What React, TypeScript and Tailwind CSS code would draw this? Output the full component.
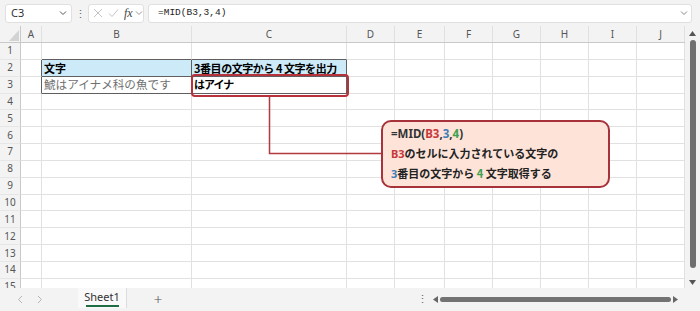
import React from "react";

const cols = [
  { key: "A", w: 21 },
  { key: "B", w: 150 },
  { key: "C", w: 155 },
  { key: "D", w: 48 },
  { key: "E", w: 50 },
  { key: "F", w: 48 },
  { key: "G", w: 48 },
  { key: "H", w: 48 },
  { key: "I", w: 48 },
  { key: "J", w: 48 },
];

const FONT = { fontFamily: '"Noto Sans", "Noto Sans CJK JP", sans-serif' };
const JP = { fontFamily: '"Noto Sans CJK JP", sans-serif' };

function cellClass(r: number, c: string) {
  let right = "border-r-[#e1e1e1]";
  let bottom = "border-b-[#e1e1e1]";
  if ((r === 2 || r === 3) && (c === "A" || c === "B" || c === "C")) right = "border-r-[#5f5f5f]";
  if ((r === 1 || r === 2 || r === 3) && (c === "B" || c === "C")) bottom = "border-b-[#5f5f5f]";
  return `${right} ${bottom}`;
}

function Cell({ r, c, w }: { r: number; c: string; w: number }) {
  let content: React.ReactNode = null;
  let bg = "";
  if (r === 2 && c === "B") {
    bg = "bg-[#cdeaf8]";
    content = <span className="font-bold text-[11px] text-black" style={JP}>文字</span>;
  }
  if (r === 2 && c === "C") {
    bg = "bg-[#cdeaf8]";
    content = (
      <span className="font-bold text-[11px] text-black tracking-[-0.45px]" style={JP}>
        3番目の文字から 4 文字を出力
      </span>
    );
  }
  if (r === 3 && c === "B") {
    content = (
      <span className="text-[11.6px] text-[#707070]" style={JP}>
        鯱はアイナメ科の魚です
      </span>
    );
  }
  if (r === 3 && c === "C") {
    content = (
      <span className="font-bold text-[11px] text-black tracking-[-1px]" style={JP}>
        はアイナ
      </span>
    );
  }
  return (
    <div
      className={`h-full shrink-0 border-r border-b flex items-center pl-[2px] overflow-hidden whitespace-nowrap ${bg} ${cellClass(r, c)}`}
      style={{ width: w }}
    >
      {content}
    </div>
  );
}

export default function App() {
  const rows = Array.from({ length: 15 }, (_, i) => i + 1);
  return (
    <div className="w-[700px] h-[311px] overflow-hidden bg-[#f3f3f3] flex flex-col" style={FONT}>
      {/* Formula bar */}
      <div className="h-[26px] shrink-0 flex items-center pl-[5px] pr-[8px]">
        <div className="w-[67px] h-[19px] bg-white border border-[#e0e0e0] rounded-[3px] flex items-center justify-between pl-[5px] pr-[4px]">
          <span className="text-[11px] text-[#333]">C3</span>
          <svg width="8" height="8" viewBox="0 0 8 8"><path d="M1 2.5 L4 5.5 L7 2.5" stroke="#555" strokeWidth="1" fill="none" /></svg>
        </div>
        <div className="w-[16px] flex justify-center text-[#666] text-[11px] leading-none">⋮</div>
        <div className="w-[56px] h-[19px] bg-white border border-[#e0e0e0] rounded-[3px] flex items-center gap-[5px] pl-[4px]">
          <svg width="10" height="10" viewBox="0 0 10 10"><path d="M1 1 L9 9 M9 1 L1 9" stroke="#c4c4c4" strokeWidth="1" /></svg>
          <svg width="11" height="10" viewBox="0 0 11 10"><path d="M1 5.5 L4 8.5 L10 1.5" stroke="#c4c4c4" strokeWidth="1" fill="none" /></svg>
          <span className="text-[12px] italic text-[#444] leading-none" style={{ fontFamily: '"Liberation Serif", serif' }}>fx</span>
          <svg width="8" height="8" viewBox="0 0 8 8" className="-ml-[3px]"><path d="M1 2.5 L4 5.5 L7 2.5" stroke="#999" strokeWidth="1" fill="none" /></svg>
        </div>
        <div className="ml-[4px] flex-1 h-[19px] bg-white border border-[#e0e0e0] rounded-[3px] flex items-center justify-between pl-[9px] pr-[3px]">
          <span className="text-[9.5px] text-[#222]" style={{ fontFamily: '"Liberation Mono", monospace' }}>=MID(B3,3,4)</span>
          <svg width="8" height="8" viewBox="0 0 8 8"><path d="M1 2.5 L4 5.5 L7 2.5" stroke="#888" strokeWidth="1" fill="none" /></svg>
        </div>
      </div>

      {/* Sheet area */}
      <div className="flex-1 flex min-h-0">
        <div className="relative w-[685px] flex flex-col bg-white overflow-hidden">
          {/* column header */}
          <div className="h-[17px] shrink-0 flex bg-[#f3f3f3] border-b border-[#c9c9c9]">
            <div className="w-[21px] shrink-0 border-r border-[#c9c9c9] relative">
              <svg width="10" height="11" viewBox="0 0 10 11" className="absolute right-[1px] bottom-[1px]">
                <polygon points="10,0 10,11 0,11" fill="#d3d3d3" />
              </svg>
            </div>
            {cols.map((c) => (
              <div
                key={c.key}
                className="shrink-0 border-r border-[#e0e0e0] flex items-center justify-center text-[10px] text-[#555]"
                style={{ width: c.w }}
              >
                {c.key}
              </div>
            ))}
          </div>
          {/* rows */}
          {rows.map((r) => (
            <div key={r} className="h-[16.85px] shrink-0 flex">
              <div className="w-[21px] shrink-0 bg-[#f3f3f3] border-r border-[#c9c9c9] border-b border-b-[#e6e6e6] flex items-center justify-center text-[10px] text-[#555]">
                {r}
              </div>
              {cols.map((c) => (
                <Cell key={c.key} r={r} c={c.key} w={c.w} />
              ))}
            </div>
          ))}

          {/* Red highlight around C3 */}
          <div className="absolute left-[191px] top-[48px] w-[158px] h-[23px] border-2 border-[#b8323c] rounded-[4px]" />
          {/* Connector */}
          <svg className="absolute left-0 top-0 pointer-events-none" width="685" height="262">
            <path d="M269.5 71 L269.5 127.5 L382 127.5" stroke="#b03a3f" strokeWidth="1.5" fill="none" />
          </svg>
          {/* Callout */}
          <div
            className="absolute left-[381px] top-[94px] w-[229px] h-[68px] bg-[#fde3d8] border-2 border-[#a8323a] rounded-[10px] flex flex-col justify-center pl-[8px] gap-[1px] font-bold text-[11px] leading-[18px] text-[#222]"
            style={JP}
          >
            <div style={{ fontFamily: '"Noto Sans", sans-serif' }} className="text-[11.5px]">
              <span className="text-[#333]">=MID(</span>
              <span className="text-[#c7383c]">B3</span>
              <span className="text-[#333]">,</span>
              <span className="text-[#3f7db8]">3</span>
              <span className="text-[#333]">,</span>
              <span className="text-[#3fa04f]">4</span>
              <span className="text-[#333]">)</span>
            </div>
            <div>
              <span className="text-[#c7383c]" style={{ fontFamily: '"Noto Sans", sans-serif' }}>B3</span>
              のセルに入力されている文字の
            </div>
            <div>
              <span className="text-[#3f7db8]" style={{ fontFamily: '"Noto Sans", sans-serif' }}>3</span>
              番目の文字から <span className="text-[#3fa04f]">4</span> 文字取得する
            </div>
          </div>
        </div>
        {/* vertical scrollbar */}
        <div className="w-[15px] flex flex-col items-center bg-[#f3f3f3]">
          <svg width="7" height="6" viewBox="0 0 7 6" className="mt-[5px]"><polygon points="3.5,0 7,5 0,5" fill="#555" /></svg>
          <div className="mt-[3px] w-[6px] h-[228px] rounded-full bg-[#6f6f6f]" />
          <div className="flex-1" />
          <svg width="7" height="6" viewBox="0 0 7 6" className="mb-[2px]"><polygon points="0,0 7,0 3.5,5" fill="#555" /></svg>
        </div>
      </div>

      {/* Bottom bar */}
      <div className="h-[23px] shrink-0 flex items-stretch bg-[#f3f3f3]">
        <div className="w-[78px] flex items-center pl-[17px] gap-[14px]">
          <svg width="6" height="9" viewBox="0 0 6 9"><path d="M5 1 L1.5 4.5 L5 8" stroke="#b5b5b5" strokeWidth="1" fill="none" /></svg>
          <svg width="6" height="9" viewBox="0 0 6 9"><path d="M1 1 L4.5 4.5 L1 8" stroke="#b5b5b5" strokeWidth="1" fill="none" /></svg>
        </div>
        <div className="w-[49px] mb-[3px] bg-[#f9f9f9] border-r border-[#dcdcdc] flex flex-col items-center justify-center">
          <span className="text-[11px] text-[#333] leading-[14px]">Sheet1</span>
          <div className="w-[33px] h-[2px] bg-[#1f6e43] mt-[1px]" />
        </div>
        <div className="w-[62px] flex items-center justify-center text-[15px] text-[#555] font-light leading-none">+</div>
        <div className="flex-1" />
        <div className="w-[16px] flex items-center justify-center text-[#666] text-[11px]">⋮</div>
        <div className="w-[270px] flex items-center pl-[3px] gap-[2px]">
          <svg width="5" height="7" viewBox="0 0 5 7"><polygon points="0,3.5 5,0 5,7" fill="#666" /></svg>
          <div className="w-[231px] h-[5px] rounded-full bg-[#727272]" />
          <svg width="5" height="7" viewBox="0 0 5 7"><polygon points="0,0 5,3.5 0,7" fill="#666" /></svg>
        </div>
      </div>
    </div>
  );
}
